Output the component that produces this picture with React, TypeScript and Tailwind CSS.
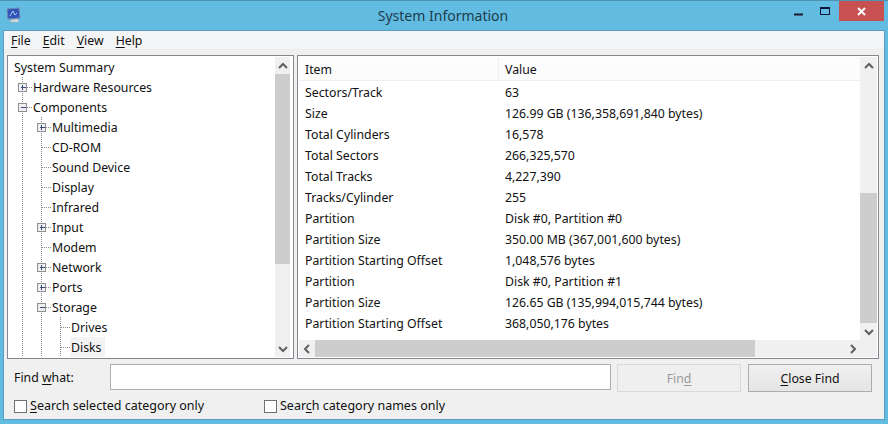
import { Fragment } from 'react';

const treeRows = [
  { level: 0, label: 'System Summary' },
  { level: 1, label: 'Hardware Resources', box: 'plus' },
  { level: 1, label: 'Components', box: 'minus' },
  { level: 2, label: 'Multimedia', box: 'plus' },
  { level: 2, label: 'CD-ROM' },
  { level: 2, label: 'Sound Device' },
  { level: 2, label: 'Display' },
  { level: 2, label: 'Infrared' },
  { level: 2, label: 'Input', box: 'plus' },
  { level: 2, label: 'Modem' },
  { level: 2, label: 'Network', box: 'plus' },
  { level: 2, label: 'Ports', box: 'plus' },
  { level: 2, label: 'Storage', box: 'minus' },
  { level: 3, label: 'Drives' },
  { level: 3, label: 'Disks', selected: true },
];

const listRows = [
  ['Sectors/Track', '63'],
  ['Size', '126.99 GB (136,358,691,840 bytes)'],
  ['Total Cylinders', '16,578'],
  ['Total Sectors', '266,325,570'],
  ['Total Tracks', '4,227,390'],
  ['Tracks/Cylinder', '255'],
  ['Partition', 'Disk #0, Partition #0'],
  ['Partition Size', '350.00 MB (367,001,600 bytes)'],
  ['Partition Starting Offset', '1,048,576 bytes'],
  ['Partition', 'Disk #0, Partition #1'],
  ['Partition Size', '126.65 GB (135,994,015,744 bytes)'],
  ['Partition Starting Offset', '368,050,176 bytes'],
];

// dotted connectors + expander box for one tree row
function TreeGuides({ level, box }: { level: number; box?: string }) {
  if (level === 0) return <div className="w-[4px] shrink-0" />;
  const width = 4 + level * 19;
  const last = 13.5 + (level - 1) * 19;
  const lines: number[] = [];
  for (let i = 0; i < level; i++) lines.push(13.5 + i * 19);
  return (
    <svg width={width} height={20} className="shrink-0" shapeRendering="crispEdges">
      {lines.map((x) => (
        <line key={x} x1={x} y1={0} x2={x} y2={20} stroke="#8a8a8a" strokeDasharray="1 1" />
      ))}
      <line x1={last} y1={10.5} x2={width} y2={10.5} stroke="#8a8a8a" strokeDasharray="1 1" />
      {box && (
        <Fragment>
          <rect x={last - 4} y={6.5} width={8} height={8} fill="#f0f0f2" stroke="#8e8f8f" />
          <line x1={last - 2} y1={10.5} x2={last + 3} y2={10.5} stroke="#3a4a7a" />
          {box === 'plus' && <line x1={last} y1={8} x2={last} y2={13} stroke="#3a4a7a" />}
        </Fragment>
      )}
    </svg>
  );
}

function Arrow({ dir }: { dir: 'up' | 'down' | 'left' | 'right' }) {
  const paths = {
    up: 'M1 6 L5 2 L9 6',
    down: 'M1 2 L5 6 L9 2',
    left: 'M6 1 L2 5 L6 9',
    right: 'M2 1 L6 5 L2 9',
  };
  const vertical = dir === 'up' || dir === 'down';
  return (
    <svg width={vertical ? 10 : 8} height={vertical ? 8 : 10} fill="none" stroke="#606060" strokeWidth={2}>
      <path d={paths[dir]} />
    </svg>
  );
}

function Underlined({ before, letter, after }: { before?: string; letter: string; after?: string }) {
  return (
    <span>
      {before}
      <span className="underline underline-offset-2">{letter}</span>
      {after}
    </span>
  );
}

function TreePane() {
  return (
    <div className="w-[287px] h-[304px] border border-[#828790] bg-white flex p-px overflow-hidden">
      <div className="flex-1 flex flex-col overflow-hidden">
        {treeRows.map((r) => (
          <div key={r.label} className="flex h-5 shrink-0 items-stretch">
            <TreeGuides level={r.level} box={r.box} />
            <span className={`pl-[1px] pr-[3px] leading-[22px] h-5 overflow-hidden ${r.selected ? 'bg-[#f3f3f3]' : ''}`}>{r.label}</span>
          </div>
        ))}
      </div>
      <div className="w-[15px] bg-[#f0f0f0] flex flex-col shrink-0 mr-[2px]">
        <div className="h-[17px] flex items-center justify-center"><Arrow dir="up" /></div>
        <div className="h-[190px] bg-[#cdcdcd]" />
        <div className="flex-1" />
        <div className="h-[17px] flex items-center justify-center"><Arrow dir="down" /></div>
      </div>
    </div>
  );
}

function ListPane() {
  return (
    <div className="w-[582px] h-[304px] border border-[#828790] bg-white flex flex-col p-px overflow-hidden">
      <div className="flex flex-1 min-h-0">
        <div className="flex-1 flex flex-col">
          <div className="h-[24px] flex border-b border-[#e8f0f5] bg-[#fcfcfc] shrink-0">
            <div className="w-[200px] pl-[6px] leading-[26px] border-r border-[#eaf0f5]">Item</div>
            <div className="pl-[6px] leading-[26px]">Value</div>
          </div>
          {listRows.map((r, i) => (
            <div key={i} className="flex h-[21px] shrink-0 leading-[23px] first:mt-px">
              <div className="w-[199px] pl-[6px]">{r[0]}</div>
              <div className="pl-[7px]">{r[1]}</div>
            </div>
          ))}
        </div>
        <div className="w-[17px] bg-[#f0f0f0] flex flex-col shrink-0">
          <div className="h-[17px] flex items-center justify-center"><Arrow dir="up" /></div>
          <div className="flex-1" />
          <div className="h-[130px] bg-[#cdcdcd]" />
          <div className="h-[17px] flex items-center justify-center"><Arrow dir="down" /></div>
        </div>
      </div>
      <div className="h-[17px] bg-[#f0f0f0] flex shrink-0 items-stretch">
        <div className="w-[16px] flex items-center justify-center"><Arrow dir="left" /></div>
        <div className="w-[440px] bg-[#cdcdcd]" />
        <div className="w-[108px] flex items-center justify-end pr-[6px]"><Arrow dir="right" /></div>
      </div>
    </div>
  );
}

function Check({ children }: { children: React.ReactNode }) {
  return (
    <label className="flex items-center gap-[3px] text-[12.5px]">
      <span className="w-[13px] h-[13px] border border-[#707070] bg-white block" />
      {children}
    </label>
  );
}

export default function App() {
  return (
    <div className="w-[888px] h-[424px] bg-[#62bbe0] border-t border-[#4a93b3] flex flex-col overflow-hidden text-[#111111] text-[12.3px] font-['Noto_Sans',sans-serif]">
      {/* title bar */}
      <div className="h-[29px] flex shrink-0 items-start">
        <svg width="16" height="17" className="ml-[6px] mt-[6px] shrink-0" viewBox="0 0 16 17">
          <path d="M1 2 L13 1 L14 11 L2 12 Z" fill="#2f55b8" stroke="#6f86b0" />
          <path d="M4 9 L7 4 L9 8 L11 6" stroke="#b9cdf5" fill="none" />
          <path d="M5 13 L12 12 L13 15 L4 15 Z" fill="#d9dde0" stroke="#a8b0b6" strokeWidth={0.5} />
        </svg>
        <div className="flex-1 text-center text-[14px] text-[#1d3d4e] leading-[29px] pl-[70px]">System Information</div>
        <svg width="10" height="3" className="mt-[12px] mr-[16px] shrink-0"><rect width="9" height="2" y="0.5" fill="#1a1a2a" /></svg>
        <svg width="11" height="9" className="mt-[6px] mr-[8px] shrink-0" shapeRendering="crispEdges">
          <rect x="0.5" y="0.5" width="9" height="7" fill="none" stroke="#10163a" />
          <line x1="0" x2="10" y1="1.5" y2="1.5" stroke="#10163a" />
        </svg>
        <div className="w-[45px] h-[20px] mr-[4px] bg-[#c75050] flex items-center justify-center shrink-0">
          <svg width="9" height="9" stroke="white" strokeWidth={2}>
            <path d="M1 1 L8 8 M8 1 L1 8" />
          </svg>
        </div>
      </div>
      {/* client area */}
      <div className="mx-[3px] mb-[4px] flex-1 border border-[#5a9fc0] bg-[#f0f0f0] flex flex-col min-h-0">
        <div className="h-[19px] bg-[#f4f5f7] border-b border-[#ededed] flex items-center gap-[12px] pl-[7px] pt-[2px] shrink-0">
          <Underlined letter="F" after="ile" />
          <Underlined letter="E" after="dit" />
          <Underlined letter="V" after="iew" />
          <Underlined letter="H" after="elp" />
        </div>
        <div className="flex gap-[3px] pl-[3px] pt-[5px]">
          <TreePane />
          <ListPane />
        </div>
        <div className="flex items-start pl-[10px] pt-[5px]">
          <div className="w-[96px] leading-[27px]"><Underlined before="Find " letter="w" after="hat:" /></div>
          <div className="w-[501px] h-[26px] border border-[#abadb3] bg-white" />
          <div className="w-[124px] h-[28px] ml-[6px] pt-[2px] border border-[#d9d9d9] bg-[#efefef] flex items-center justify-center text-[#9a9a9a]">
            <Underlined before="Fin" letter="d" />
          </div>
          <div className="w-[124px] h-[28px] ml-[7px] pt-[2px] border border-[#acacac] bg-gradient-to-b from-[#f0f0f0] to-[#e5e5e5] flex items-center justify-center">
            <Underlined letter="C" after="lose Find" />
          </div>
        </div>
        <div className="flex pl-[10px] mt-[5px] leading-[18px]">
          <div className="w-[250px]"><Check><Underlined letter="S" after="earch selected category only" /></Check></div>
          <Check><Underlined before="Sear" letter="c" after="h category names only" /></Check>
        </div>
      </div>
    </div>
  );
}
